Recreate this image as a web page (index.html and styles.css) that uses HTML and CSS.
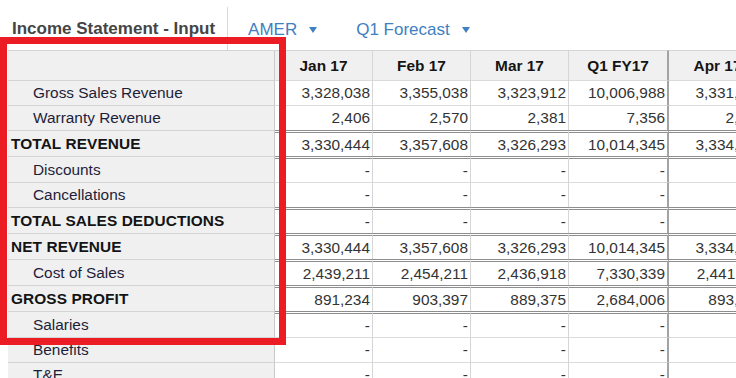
FILE: index.html
```html
<!DOCTYPE html>
<html>
<head>
<meta charset="utf-8">
<link rel="stylesheet" href="styles.css">
</head>
<body>
<div class="page">
  <div class="topbar">
    <div class="title">Income Statement - Input</div>
    <div class="filters">
      <div class="dd">AMER <span class="caret"></span></div>
      <div class="dd">Q1 Forecast <span class="caret"></span></div>
    </div>
  </div>

  <div class="grid">
    <div class="row head">
      <div class="lab"></div>
      <div class="c">Jan 17</div><div class="c">Feb 17</div><div class="c">Mar 17</div><div class="c q">Q1 FY17</div><div class="c">Apr 17</div>
    </div>
    <div class="row">
      <div class="lab sub">Gross Sales Revenue</div>
      <div class="c">3,328,038</div><div class="c">3,355,038</div><div class="c">3,323,912</div><div class="c q">10,006,988</div><div class="c">3,331,838</div>
    </div>
    <div class="row">
      <div class="lab sub">Warranty Revenue</div>
      <div class="c">2,406</div><div class="c">2,570</div><div class="c">2,381</div><div class="c q">7,356</div><div class="c">2,592</div>
    </div>
    <div class="row dbl">
      <div class="lab tot">TOTAL REVENUE</div>
      <div class="c">3,330,444</div><div class="c">3,357,608</div><div class="c">3,326,293</div><div class="c q">10,014,345</div><div class="c">3,334,430</div>
    </div>
    <div class="row dbl">
      <div class="lab sub">Discounts</div>
      <div class="c">-</div><div class="c">-</div><div class="c">-</div><div class="c q">-</div><div class="c">-</div>
    </div>
    <div class="row">
      <div class="lab sub">Cancellations</div>
      <div class="c">-</div><div class="c">-</div><div class="c">-</div><div class="c q">-</div><div class="c">-</div>
    </div>
    <div class="row dbl">
      <div class="lab tot">TOTAL SALES DEDUCTIONS</div>
      <div class="c">-</div><div class="c">-</div><div class="c">-</div><div class="c q">-</div><div class="c">-</div>
    </div>
    <div class="row dbl">
      <div class="lab tot">NET REVENUE</div>
      <div class="c">3,330,444</div><div class="c">3,357,608</div><div class="c">3,326,293</div><div class="c q">10,014,345</div><div class="c">3,334,430</div>
    </div>
    <div class="row dbl">
      <div class="lab sub">Cost of Sales</div>
      <div class="c">2,439,211</div><div class="c">2,454,211</div><div class="c">2,436,918</div><div class="c q">7,330,339</div><div class="c">2,441,211</div>
    </div>
    <div class="row dbl">
      <div class="lab tot">GROSS PROFIT</div>
      <div class="c">891,234</div><div class="c">903,397</div><div class="c">889,375</div><div class="c q">2,684,006</div><div class="c">893,219</div>
    </div>
    <div class="row dbl">
      <div class="lab sub">Salaries</div>
      <div class="c">-</div><div class="c">-</div><div class="c">-</div><div class="c q">-</div><div class="c">-</div>
    </div>
    <div class="row">
      <div class="lab sub">Benefits</div>
      <div class="c">-</div><div class="c">-</div><div class="c">-</div><div class="c q">-</div><div class="c">-</div>
    </div>
    <div class="row">
      <div class="lab sub">T&amp;E</div>
      <div class="c">-</div><div class="c">-</div><div class="c">-</div><div class="c q">-</div><div class="c">-</div>
    </div>
  </div>

  <div class="highlight"></div>
</div>
</body>
</html>
```

FILE: styles.css
```css
* { box-sizing: border-box; }
html, body { margin: 0; padding: 0; background: #fff; }
body { width: 736px; height: 378px; overflow: hidden; font-family: "Liberation Sans", Arial, sans-serif; }
.page { position: relative; width: 736px; height: 378px; overflow: hidden; }

.topbar { display: flex; height: 50px; }
.title {
  margin-top: 7px;
  padding: 0 12px;
  display: flex; align-items: center;
  border-right: 1px solid #d9d9d9;
  font-size: 17px; font-weight: bold; color: #454545;
  white-space: nowrap;
}
.filters { display: flex; align-items: center; padding-left: 20px; padding-top: 10px; }
.dd { display: flex; align-items: center; gap: 12px; font-size: 17px; color: #3f80c2; margin-right: 39px; white-space: nowrap; }
.caret { width: 0; height: 0; border-left: 4.5px solid transparent; border-right: 4.5px solid transparent; border-top: 6px solid #3f80c2; }

.grid { margin-left: 8px; width: 800px; }
.row { display: grid; grid-template-columns: 267px 98px 98px 98px 100px 98px; height: 25px; }
.row.head { height: 30px; }
.row.dbl { height: 26px; }

.row > div {
  display: flex; align-items: center;
  border-top: 1px solid #dadada;
  border-right: 1px solid #d6d6d6;
  white-space: nowrap; overflow: hidden;
  font-size: 15.4px;
}
.lab { background: #f0f0f0; border-right-color: #c9c9c9 !important; border-top-color: #d4d4d4 !important; }
.sub { padding-left: 25px; color: #1e1e3a; }
.tot { padding-left: 3px; font-weight: bold; color: #141414; letter-spacing: 0.1px; }

.c { justify-content: flex-end; padding-right: 2px; color: #333; background: #fff; }
.row > .q { border-right: 2px solid #a3a3a3; }
.row.dbl > .c { border-top: 3px double #8e8e8e; }

.head > div { background: #f0f0f0; border-top-color: #d4d4d4; }
.head > .c { justify-content: center; padding-right: 0; font-weight: bold; color: #151515; }

.highlight {
  position: absolute; left: 0; top: 37px; width: 286px; height: 308px;
  border: 7px solid #ec1c24;
}
```
